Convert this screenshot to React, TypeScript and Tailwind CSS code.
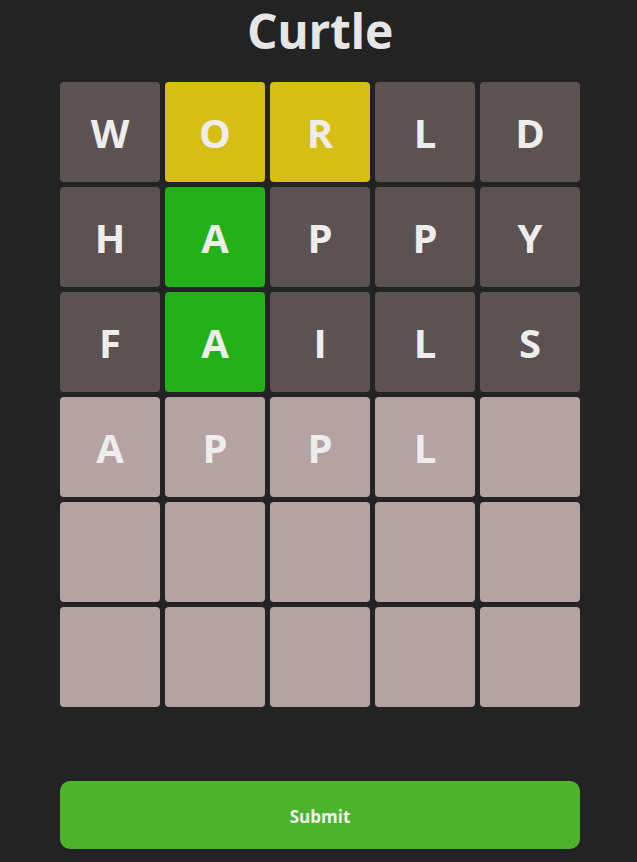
import React from "react";

type Tile = { letter: string; state: "absent" | "present" | "correct" | "pending" | "empty" };

const stateClass: Record<Tile["state"], string> = {
  absent: "bg-[#5b5251]",
  present: "bg-[#d6be12]",
  correct: "bg-[#22b116]",
  pending: "bg-[#b4a3a2]",
  empty: "bg-[#b4a3a2]",
};

const guesses = ["WORLD", "HAPPY", "FAILS"];
const states: Tile["state"][][] = [
  ["absent", "present", "present", "absent", "absent"],
  ["absent", "correct", "absent", "absent", "absent"],
  ["absent", "correct", "absent", "absent", "absent"],
];

const buildBoard = (): Tile[][] => {
  const rows: Tile[][] = guesses.map((word, r) =>
    word.split("").map((letter, c) => ({ letter, state: states[r][c] }))
  );
  rows.push("APPL ".split("").map((ch) => ({ letter: ch.trim(), state: "pending" })));
  while (rows.length < 6) {
    rows.push(Array.from({ length: 5 }, () => ({ letter: "", state: "empty" as const })));
  }
  return rows;
};

export default function App() {
  const board = buildBoard();

  return (
    <div
      className="min-h-[862px] bg-[#232323] flex flex-col items-center pl-[3px]"
      style={{ fontFamily: '"Open Sans", "Noto Sans", sans-serif' }}
    >
      <h1 className="text-[48px] font-bold text-[#e6e6e6] leading-[60px] mt-[1px] mb-[21px] tracking-[-0.3px]">
        Curtle
      </h1>
      <div className="grid grid-cols-5 gap-[5px]">
        {board.flat().map((tile, i) => (
          <div
            key={i}
            className={`w-[100px] h-[100px] rounded-[4px] flex items-center justify-center text-[40px] font-bold text-[#ededed] pt-[2px] ${stateClass[tile.state]}`}
          >
            {tile.letter}
          </div>
        ))}
      </div>
      <button className="mt-[74px] w-[520px] h-[68px] rounded-[10px] bg-[#4ab52a] text-[#f2f2f2] text-[17px] font-bold pt-[3px]">
        Submit
      </button>
    </div>
  );
}
